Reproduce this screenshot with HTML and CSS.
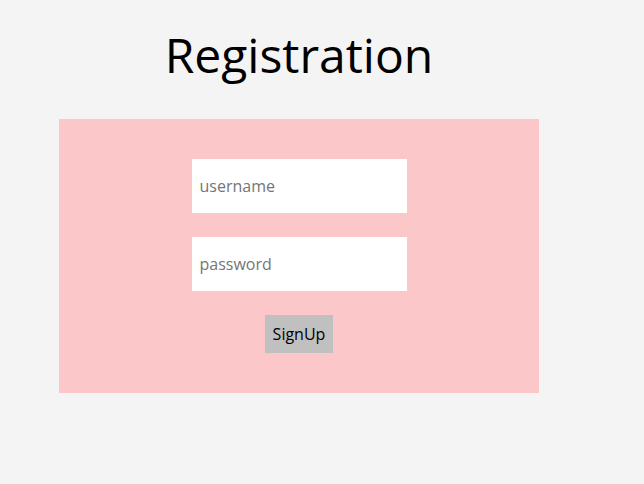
FILE: index.html
```html
<!DOCTYPE html>
<html>
<head>
<meta charset="utf-8">
<link rel="stylesheet" href="styles.css">
</head>
<body>
<div class="page">
  <h1 class="title">Registration</h1>
  <form class="card">
    <input class="field" type="text" placeholder="username">
    <input class="field" type="password" placeholder="password">
    <button class="btn" type="button">SignUp</button>
  </form>
</div>
</body>
</html>
```
FILE: styles.css
```css
html, body {
  margin: 0;
  padding: 0;
  background: #f4f4f4;
  font-family: "Open Sans", sans-serif;
}
.page {
  width: 480px;
  margin-left: 59px;
  padding-top: 22px;
}
.title {
  margin: 0 0 32px;
  font-size: 48px;
  font-weight: 400;
  line-height: 65px;
  text-align: center;
  color: #000;
}
.card {
  margin: 0;
  background: #fcc7c9;
  height: 274px;
  box-sizing: border-box;
  padding: 40px 0;
  display: flex;
  flex-direction: column;
  align-items: center;
  gap: 24px;
}
.field {
  width: 215px;
  height: 54px;
  box-sizing: border-box;
  border: none;
  outline: none;
  background: #fff;
  padding: 0 8px;
  font-family: "Open Sans", sans-serif;
  font-size: 16px;
  color: #000;
}
.field::placeholder {
  color: #757575;
}
.btn {
  height: 38px;
  box-sizing: border-box;
  border: none;
  background: #c0c0c0;
  padding: 0 8px;
  font-family: "Open Sans", sans-serif;
  font-size: 16px;
  color: #000;
}
```
